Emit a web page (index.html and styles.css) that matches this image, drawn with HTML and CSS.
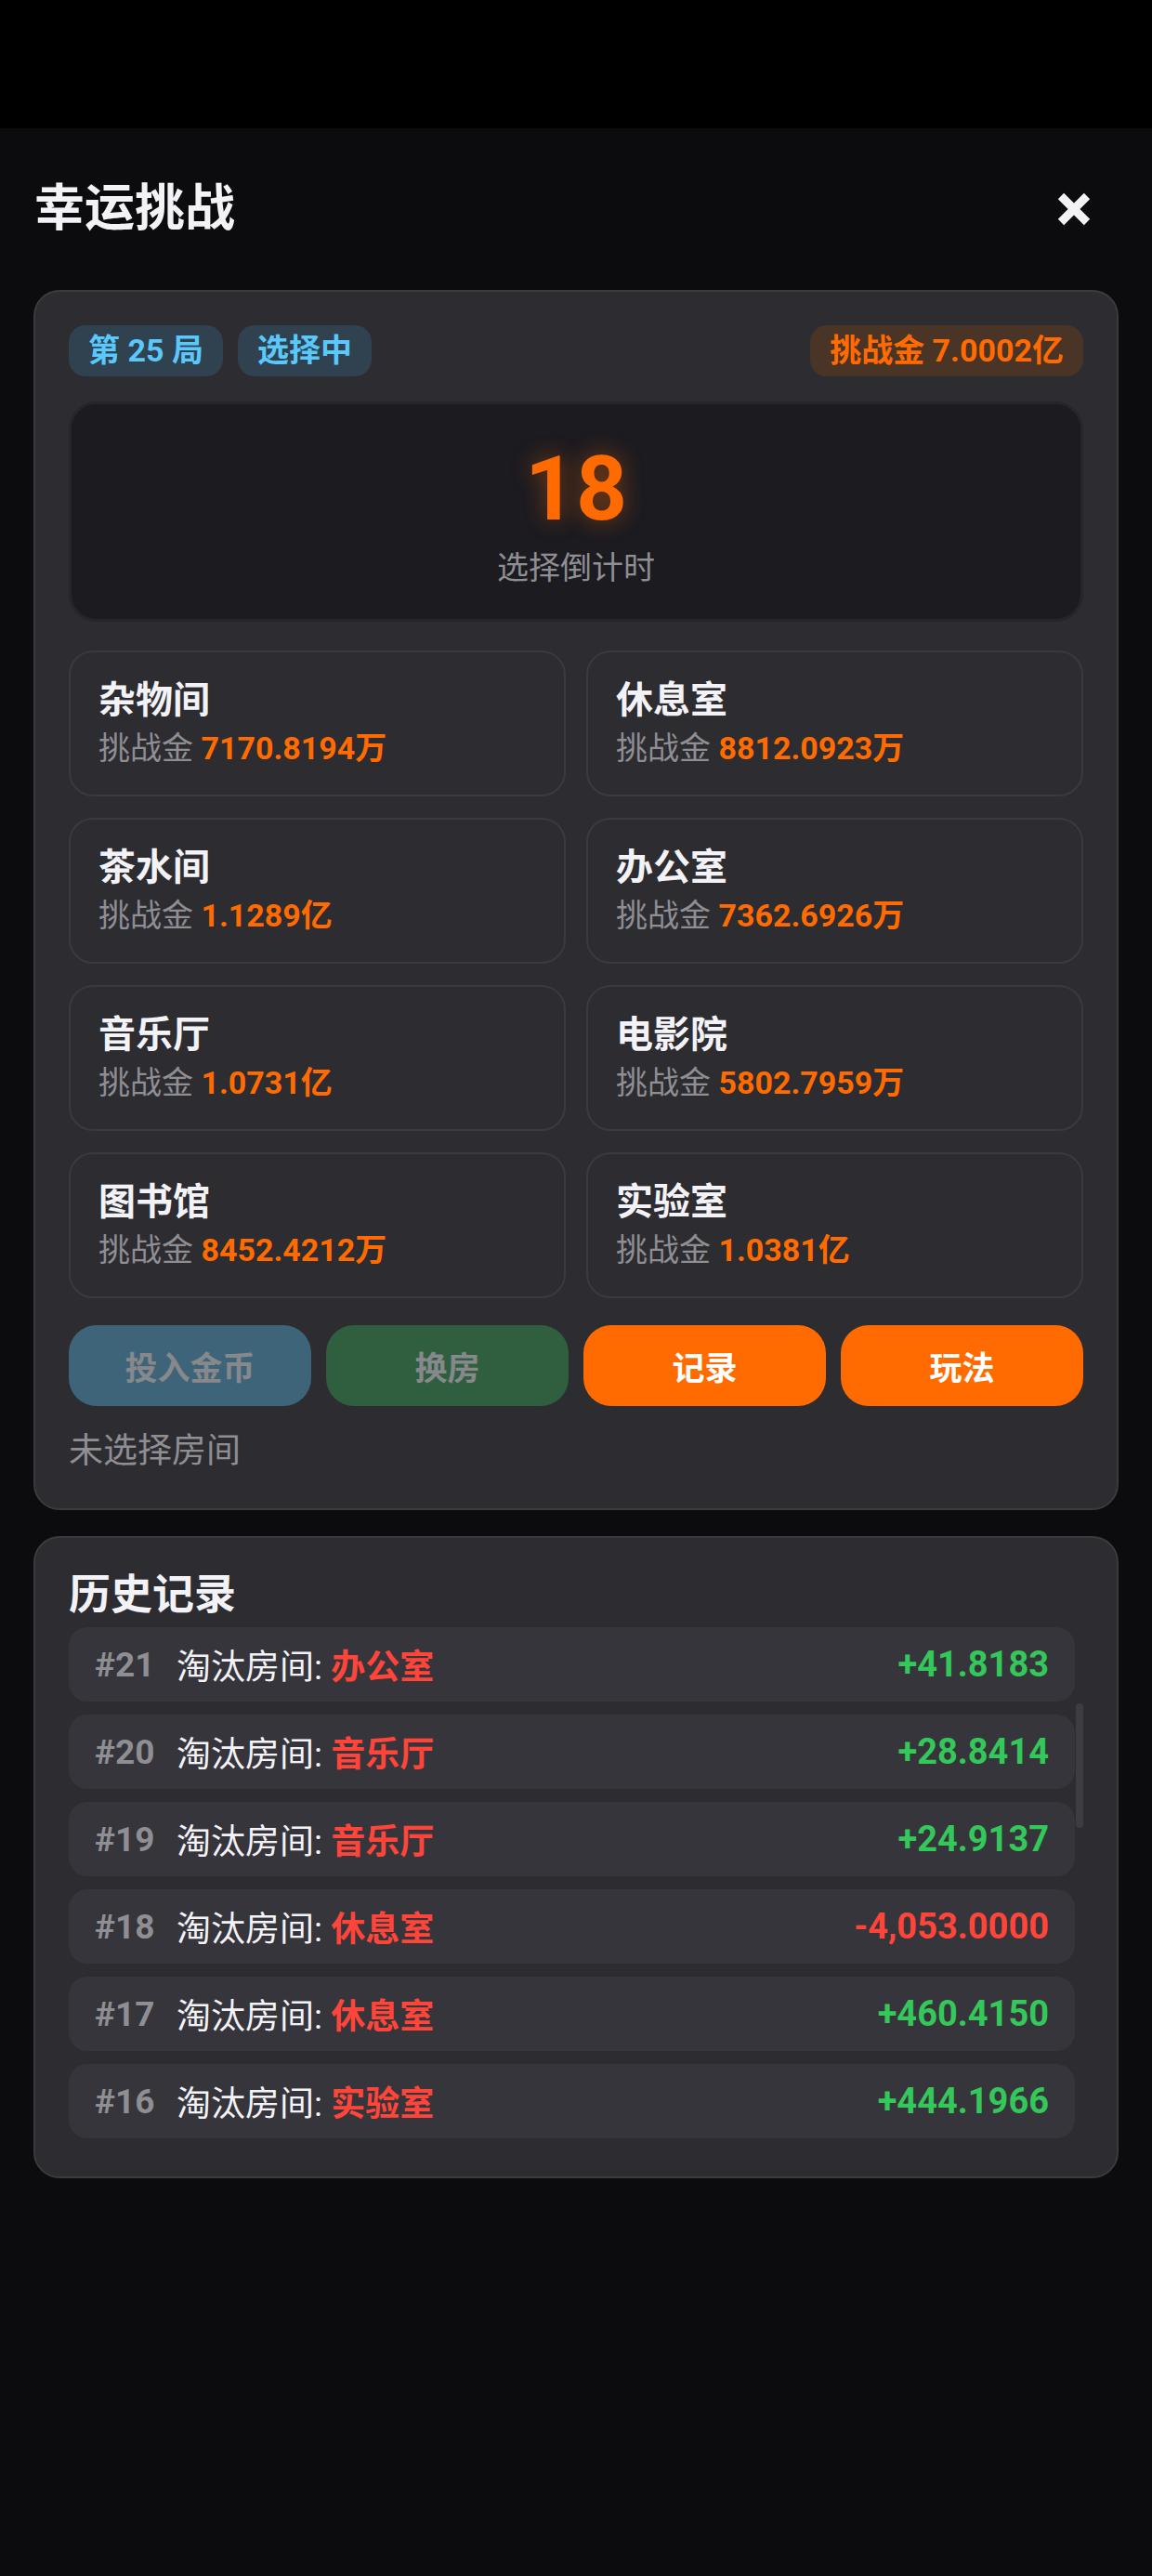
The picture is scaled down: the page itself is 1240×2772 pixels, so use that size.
FILE: index.html
```html
<!DOCTYPE html>
<html lang="zh-CN">
<head>
  <meta charset="UTF-8">
  <meta name="viewport" content="width=device-width, initial-scale=1">
  <title>幸运挑战</title>
  <link rel="stylesheet" href="styles.css">
</head>
<body>

  <div class="statusbar"></div>

  <div class="page">
    <div class="header">
      <h1>幸运挑战</h1>
      <button class="close" aria-label="关闭">
        <svg width="36" height="36" viewBox="0 0 36 36">
          <path d="M4 4 L32 32 M32 4 L4 32" stroke="#f2f2f7" stroke-width="9" fill="none"/>
        </svg>
      </button>
    </div>

    <div class="card">
      <div class="topline">
        <div class="badges">
          <span class="badge blue">第 25 局</span>
          <span class="badge blue">选择中</span>
        </div>
        <span class="badge orange">挑战金 7.0002亿</span>
      </div>

      <div class="timer">
        <div class="count">18</div>
        <div class="timer-label">选择倒计时</div>
      </div>

      <div class="rooms">
        <div class="room"><div class="room-name">杂物间</div><div class="room-sub">挑战金 <b>7170.8194万</b></div></div>
        <div class="room"><div class="room-name">休息室</div><div class="room-sub">挑战金 <b>8812.0923万</b></div></div>
        <div class="room"><div class="room-name">茶水间</div><div class="room-sub">挑战金 <b>1.1289亿</b></div></div>
        <div class="room"><div class="room-name">办公室</div><div class="room-sub">挑战金 <b>7362.6926万</b></div></div>
        <div class="room"><div class="room-name">音乐厅</div><div class="room-sub">挑战金 <b>1.0731亿</b></div></div>
        <div class="room"><div class="room-name">电影院</div><div class="room-sub">挑战金 <b>5802.7959万</b></div></div>
        <div class="room"><div class="room-name">图书馆</div><div class="room-sub">挑战金 <b>8452.4212万</b></div></div>
        <div class="room"><div class="room-name">实验室</div><div class="room-sub">挑战金 <b>1.0381亿</b></div></div>
      </div>

      <div class="actions">
        <button class="btn btn-coin">投入金币</button>
        <button class="btn btn-swap">换房</button>
        <button class="btn btn-main">记录</button>
        <button class="btn btn-main">玩法</button>
      </div>

      <div class="status">未选择房间</div>
    </div>

    <div class="card history">
      <h2>历史记录</h2>
      <div class="list-wrap">
        <div class="list">
          <div class="row"><span class="rid">#21</span><span class="rtext">淘汰房间: <b>办公室</b></span><span class="amount up">+41.8183</span></div>
          <div class="row"><span class="rid">#20</span><span class="rtext">淘汰房间: <b>音乐厅</b></span><span class="amount up">+28.8414</span></div>
          <div class="row"><span class="rid">#19</span><span class="rtext">淘汰房间: <b>音乐厅</b></span><span class="amount up">+24.9137</span></div>
          <div class="row"><span class="rid">#18</span><span class="rtext">淘汰房间: <b>休息室</b></span><span class="amount down">-4,053.0000</span></div>
          <div class="row"><span class="rid">#17</span><span class="rtext">淘汰房间: <b>休息室</b></span><span class="amount up">+460.4150</span></div>
          <div class="row"><span class="rid">#16</span><span class="rtext">淘汰房间: <b>实验室</b></span><span class="amount up">+444.1966</span></div>
        </div>
        <div class="thumb"></div>
      </div>
    </div>
  </div>

</body>
</html>
```

FILE: styles.css
```css
body {
  margin: 0;
  background: #0c0c0e;
  color: #f2f2f7;
  font-family: Roboto, "Noto Sans CJK SC", sans-serif;
  min-height: 2772px;
}
.statusbar {
  height: 138px;
  background: #000;
}
.page {
  padding: 0 36px;
}
.header {
  height: 174px;
  display: flex;
  align-items: center;
  justify-content: space-between;
}
h1 {
  margin: 0;
  padding-left: 1px;
  font-size: 54px;
  font-weight: 700;
  line-height: 60px;
}
.close {
  background: none;
  border: none;
  padding: 0;
  margin-right: 30px;
  width: 36px;
  height: 36px;
  display: flex;
}
.card {
  background: #2c2c31;
  border: 2px solid #3a3a3f;
  border-radius: 28px;
  padding: 36px;
  margin-bottom: 28px;
}
.topline {
  display: flex;
  justify-content: space-between;
  align-items: center;
}
.badges {
  display: flex;
  gap: 16px;
}
.badge {
  height: 55px;
  line-height: 55px;
  padding: 0 21px;
  border-radius: 18px;
  font-size: 34px;
  font-weight: 700;
}
.badge.blue {
  background: #30424f;
  color: #5ac8fa;
}
.badge.orange {
  background: #4a3426;
  color: #ff6b00;
}
.timer {
  margin-top: 27px;
  background: #1c1b20;
  border: 3px solid #262529;
  border-radius: 30px;
  display: flex;
  flex-direction: column;
  align-items: center;
  padding-top: 41px;
  height: 190px;
}
.count {
  font-size: 96px;
  font-weight: 700;
  line-height: 100px;
  color: #ff6b00;
  text-shadow: 0 0 24px rgba(255, 107, 0, 0.45);
}
.timer-label {
  margin-top: 13px;
  font-size: 34px;
  line-height: 44px;
  color: #8e8e93;
}
.rooms {
  margin-top: 31px;
  display: grid;
  grid-template-columns: 1fr 1fr;
  gap: 23px 22px;
}
.room {
  height: 153px;
  border: 2px solid #3a3a3f;
  border-radius: 26px;
  padding: 0 30px;
  display: flex;
  flex-direction: column;
  justify-content: center;
}
.room-name {
  font-size: 40px;
  font-weight: 700;
  line-height: 50px;
  margin-top: -2px;
}
.room-sub {
  margin-top: 4px;
  font-size: 34px;
  line-height: 44px;
  color: #8e8e93;
}
.room-sub b {
  color: #ff6b00;
  font-weight: 700;
}
.actions {
  margin-top: 29px;
  display: grid;
  grid-template-columns: repeat(4, 1fr);
  gap: 16px;
}
.btn {
  height: 87px;
  border: none;
  border-radius: 30px;
  font-family: inherit;
  font-size: 35px;
  font-weight: 700;
  color: #fff;
}
.btn-coin {
  background: #3e6479;
  color: #87888c;
}
.btn-swap {
  background: #305f40;
  color: #87888c;
}
.btn-main {
  background: #ff6b00;
}
.status {
  margin-top: 24px;
  font-size: 37px;
  line-height: 50px;
  color: #8e8e93;
}
.history {
  padding-bottom: 41px;
}
h2 {
  margin: 0;
  font-size: 45px;
  font-weight: 700;
  line-height: 52px;
}
.list-wrap {
  position: relative;
  margin-top: 8px;
  padding-right: 9px;
}
.list {
  display: flex;
  flex-direction: column;
  gap: 14px;
}
.row {
  height: 80px;
  background: #36353b;
  border-radius: 20px;
  padding: 0 28px;
  display: flex;
  align-items: center;
  font-size: 37px;
}
.rid {
  width: 88px;
  color: #8e8e93;
  font-weight: 700;
}
.rtext b {
  color: #ff453a;
  font-weight: 700;
}
.amount {
  margin-left: auto;
  font-size: 38px;
  font-weight: 700;
}
.amount.up {
  color: #34c759;
}
.amount.down {
  color: #ff453a;
}
.thumb {
  position: absolute;
  right: 0;
  top: 82px;
  width: 8px;
  height: 134px;
  border-radius: 4px;
  background: #3d3c42;
}
```
